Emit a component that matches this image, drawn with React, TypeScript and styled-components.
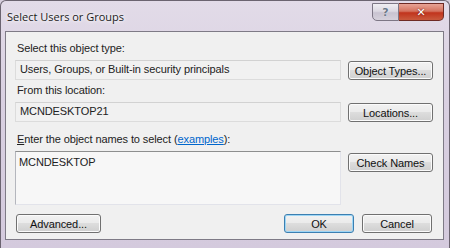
import React from "react";
import styled, { createGlobalStyle } from "styled-components";

const Global = createGlobalStyle`
  html, body { margin: 0; padding: 0; background: #d6cedd; }
  body { font-family: "Liberation Sans", Arial, sans-serif; }
`;

const Window = styled.div`
  width: 450px;
  height: 248px;
  box-sizing: border-box;
  background: linear-gradient(180deg, #e2dbe8 0%, #d9d0e1 40%, #d4cadd 100%);
  border: 1px solid #6b6470;
  border-bottom: none;
  border-radius: 6px 6px 0 0;
  display: flex;
  flex-direction: column;
  padding: 0 5px 8px 4px;
`;

const TitleBar = styled.div`
  height: 30px;
  display: flex;
  align-items: flex-start;
  justify-content: space-between;
`;

const Title = styled.div`
  font-family: "Open Sans", "Liberation Sans", sans-serif;
  font-size: 11px;
  color: #1b1b1b;
  padding: 8px 0 0 2px;
  text-shadow: 0 0 6px #fff, 0 0 3px #fff;
`;

const Caption = styled.div`
  display: flex;
  margin-top: 2px;
`;

const CapBtn = styled.div<{ $close?: boolean }>`
  height: 18px;
  width: ${(p) => (p.$close ? "45px" : "27px")};
  box-sizing: border-box;
  border: 1px solid ${(p) => (p.$close ? "#6e2a24" : "#7d7685")};
  border-radius: ${(p) => (p.$close ? "0 0 5px 0" : "0 0 0 5px")};
  ${(p) => (p.$close ? "border-left: none;" : "")}
  background: ${(p) =>
    p.$close
      ? "linear-gradient(180deg, #e8a395 0%, #d5735f 45%, #c1341d 55%, #c95a3d 100%)"
      : "linear-gradient(180deg, #f0eef3 0%, #dcd8e2 45%, #c9c3d1 55%, #d6d1dc 100%)"};
  display: flex;
  align-items: center;
  justify-content: center;
  color: ${(p) => (p.$close ? "#fff" : "#6b7a8a")};
  font-family: "DejaVu Sans", sans-serif;
  font-weight: bold;
  font-size: 11px;
  text-shadow: ${(p) => (p.$close ? "0 0 2px #5a1008" : "0 0 1px #fff")};
`;

const Client = styled.div`
  flex: 1;
  background: #f0f0f0;
  border: 1px solid #7e7a86;
  display: flex;
  flex-direction: column;
  padding: 10px 10px 0 9px;
  font-size: 11px;
  letter-spacing: -0.1px;
  color: #222;
`;

const Label = styled.div`
  height: 13px;
  line-height: 13px;
  padding-left: 2px;
  margin-bottom: 5px;
`;

const Row = styled.div<{ $gap?: number }>`
  display: flex;
  align-items: flex-start;
  justify-content: space-between;
  margin-bottom: ${(p) => p.$gap ?? 0}px;
`;

const Field = styled.div`
  width: 326px;
  height: 20px;
  box-sizing: border-box;
  border: 1px solid #dcdcdc;
  border-top-color: #d2d2d2;
  background: #f1f1f1;
  padding: 1px 0 0 4px;
  line-height: 14px;
`;

const Area = styled.div`
  width: 326px;
  height: 54px;
  box-sizing: border-box;
  border: 1px solid #e2e3ea;
  border-top-color: #8e8f8f;
  border-left-color: #b4b6bd;
  background: #f7f7f7;
  padding: 3px 0 0 3px;
  line-height: 14px;
`;

const Button = styled.div<{ $w?: number; $focus?: boolean; $mt?: number }>`
  width: ${(p) => p.$w ?? 85}px;
  height: 19px;
  margin-top: ${(p) => p.$mt ?? 0}px;
  box-sizing: border-box;
  border: 1px solid ${(p) => (p.$focus ? "#3c7fb1" : "#707070")};
  border-radius: 3px;
  background: linear-gradient(180deg, #f2f2f2 0%, #ebebeb 45%, #dddddd 50%, #cfcfcf 100%);
  box-shadow: inset 0 0 0 1px ${(p) => (p.$focus ? "#9ed6f5" : "#fbfbfb")};
  display: flex;
  align-items: center;
  justify-content: center;
  color: #111;
  font-size: 11px;
`;

const Link = styled.span`
  color: #0066cc;
  text-decoration: underline;
`;

const U = styled.span`
  text-decoration: underline;
`;

const Footer = styled.div`
  display: flex;
  align-items: center;
  margin-top: 9px;
  padding-left: 1px;
`;

const Spacer = styled.div`
  flex: 1;
`;

const FooterRight = styled.div`
  display: flex;
  gap: 8px;
  margin-right: 1px;
`;

export default function App() {
  return (
    <>
      <Global />
      <Window>
        <TitleBar>
          <Title>Select Users or Groups</Title>
          <Caption>
            <CapBtn>?</CapBtn>
            <CapBtn $close>✕</CapBtn>
          </Caption>
        </TitleBar>
        <Client>
          <Label>Select this object type:</Label>
          <Row $gap={4}>
            <Field>Users, Groups, or Built-in security principals</Field>
            <Button $mt={1}>Object Types...</Button>
          </Row>
          <Label>From this location:</Label>
          <Row $gap={11}>
            <Field>MCNDESKTOP21</Field>
            <Button $mt={1}>Locations...</Button>
          </Row>
          <Label>
            <U>E</U>nter the object names to select (<Link>examples</Link>):
          </Label>
          <Row>
            <Area>MCNDESKTOP</Area>
            <Button $mt={2}>Check Names</Button>
          </Row>
          <Footer>
            <Button $w={85}>Advanced...</Button>
            <Spacer />
            <FooterRight>
              <Button $w={70} $focus>
                OK
              </Button>
              <Button $w={70}>Cancel</Button>
            </FooterRight>
          </Footer>
        </Client>
      </Window>
    </>
  );
}
